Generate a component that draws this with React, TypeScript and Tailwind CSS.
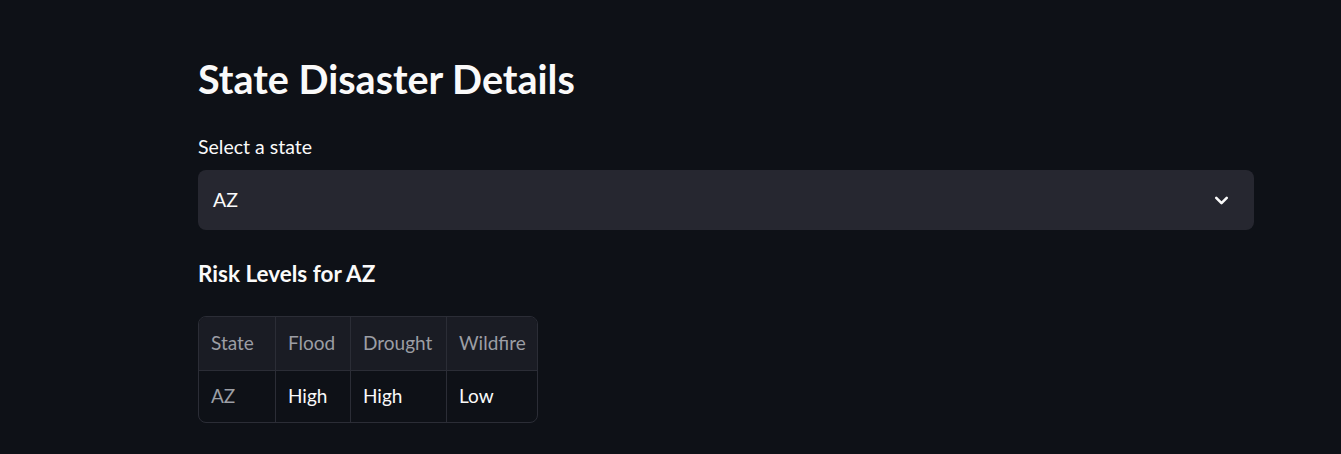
import { ChevronDown } from "lucide-react";

const columns = ["State", "Flood", "Drought", "Wildfire"];
const row = ["AZ", "High", "High", "Low"];
const widths = ["w-[77px]", "w-[75px]", "w-[96px]", "w-[90px]"];

export default function App() {
  return (
    <div
      className="min-h-[454px] w-full bg-[#0e1117] text-[#fafafa]"
      style={{ fontFamily: "Lato, 'Noto Sans', sans-serif" }}
    >
      <div className="ml-[198px] w-[1056px] pt-[55px]">
        <h1 className="text-[39.5px] font-bold leading-[48px]">
          State Disaster Details
        </h1>

        <label className="mt-[32px] block text-[19.5px] leading-[24px]">
          Select a state
        </label>
        <div className="mt-[11px] flex h-[60px] items-center justify-between rounded-lg bg-[#262730] pl-[15px] pr-[22px]">
          <span className="text-[19.5px]">AZ</span>
          <ChevronDown size={21} strokeWidth={3} className="text-[#fafafa]" />
        </div>

        <h3 className="mt-[29px] text-[22.5px] font-bold leading-[30px]">
          Risk Levels for AZ
        </h3>

        <div className="mt-[27px] inline-block overflow-hidden rounded-lg border border-[#2b2d36]">
          <div className="flex h-[53px] bg-[#1a1c24] text-[19px] text-[#9c9ea4]">
            {columns.map((c, i) => (
              <div
                key={c}
                className={`${widths[i]} flex items-center border-[#2b2d36] px-[12px] ${
                  i < columns.length - 1 ? "border-r" : ""
                }`}
              >
                {c}
              </div>
            ))}
          </div>
          <div className="flex h-[52px] border-t border-[#2b2d36] text-[19px]">
            {row.map((c, i) => (
              <div
                key={i}
                className={`${widths[i]} flex items-center border-[#2b2d36] px-[12px] ${
                  i < row.length - 1 ? "border-r" : ""
                } ${i === 0 ? "text-[#9c9ea4]" : "text-[#fafafa]"}`}
              >
                {c}
              </div>
            ))}
          </div>
        </div>
      </div>
    </div>
  );
}
